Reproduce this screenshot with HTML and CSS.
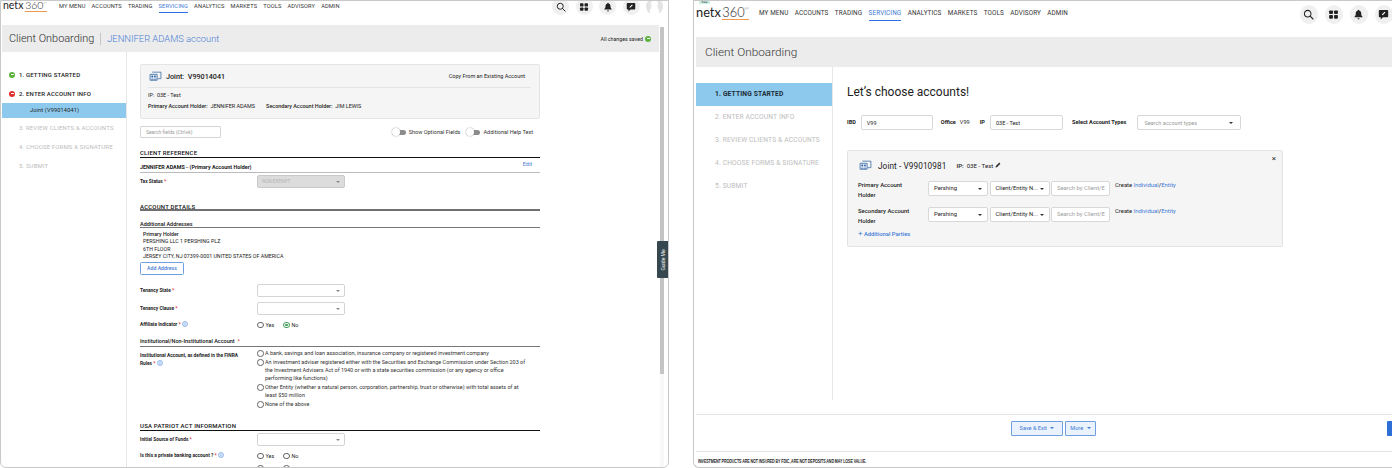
FILE: index.html
```html
<!DOCTYPE html>
<html lang="en">
<head>
<meta charset="utf-8">
<title>Client Onboarding</title>
<link rel="stylesheet" href="styles.css">
</head>
<body>
<svg class="defs" width="0" height="0" aria-hidden="true">
  <symbol id="i-search" viewBox="0 0 20 20"><circle cx="8.500" cy="8.500" r="6" fill="none" stroke="#222" stroke-width="1.900"/><path d="M13 13l5.200 5.200" stroke="#222" stroke-width="2" stroke-linecap="round"/></symbol>
  <symbol id="i-grid" viewBox="0 0 20 20"><rect x="2" y="2.500" width="7" height="6.500" rx="1.500" fill="#222"/><rect x="11" y="2.500" width="7" height="6.500" rx="1.500" fill="#222"/><rect x="2" y="11" width="7" height="6.500" rx="1.500" fill="#222"/><rect x="11" y="11" width="7" height="6.500" rx="1.500" fill="#222"/></symbol>
  <symbol id="i-bell" viewBox="0 0 20 20"><path d="M10 1.500c.8 0 1.300.6 1.300 1.300 2.700.7 3.700 3 3.700 5.700 0 3 1 4.300 2.300 5.700v1H2.700v-1C4 12.800 5 11.500 5 8.500c0-2.700 1-5 3.700-5.700 0-.7.5-1.300 1.300-1.300z" fill="#222"/><path d="M8 17h4a2 2 0 0 1-4 0z" fill="#222"/></symbol>
  <symbol id="i-chat" viewBox="0 0 20 20"><path d="M3 2h14a1.500 1.500 0 0 1 1.500 1.500v10A1.500 1.500 0 0 1 17 15H9l-4 4v-4H3a1.500 1.500 0 0 1-1.500-1.500v-10A1.500 1.500 0 0 1 3 2z" fill="#222"/><path d="M7 11.500l.5-2 4.500-4.500 1.500 1.500-4.500 4.500z" fill="#fff"/></symbol>
  <symbol id="i-acct" viewBox="0 0 24 20"><path d="M6 2h16v12h-6" fill="none" stroke="#3f6fa8" stroke-width="1.500"/><path d="M2 6h13v11H2z" fill="#dce7f3" stroke="#3f6fa8" stroke-width="1.500"/><circle cx="6" cy="10" r="1.700" fill="#2f5f9e"/><circle cx="11" cy="10" r="1.700" fill="#2f5f9e"/><path d="M3.500 15.500c0-2 5-2 5 0zM8.500 15.500c0-2 5-2 5 0z" fill="#2f5f9e"/></symbol>
  <symbol id="i-info" viewBox="0 0 12 12"><circle cx="6" cy="6" r="5" fill="#e3eefb" stroke="#3f7fd8" stroke-width="1"/><path d="M6 5v3.500M6 3v1" stroke="#3f7fd8" stroke-width="1.200"/></symbol>
</svg>

<section class="win win-a">
  <header class="topbar">
    <div class="logo"><b>netx</b><span>360<i>°*</i></span></div>
    <nav class="nav">
      <a>MY MENU</a><a>ACCOUNTS</a><a>TRADING</a><a class="on">SERVICING</a><a>ANALYTICS</a><a>MARKETS</a><a>TOOLS</a><a>ADVISORY</a><a>ADMIN</a>
    </nav>
    <div class="tools">
      <span class="ic"><svg><use href="#i-search"/></svg></span>
      <span class="ic"><svg><use href="#i-grid"/></svg></span>
      <span class="ic"><svg><use href="#i-bell"/></svg></span>
      <span class="ic"><svg><use href="#i-chat"/></svg></span>
      <span class="ic avatar"></span>
    </div>
  </header>
  <div class="hdr">
    <h1>Client Onboarding</h1><span class="acct">JENNIFER ADAMS account</span>
    <span class="saved">All changes saved <em class="dot ok"></em></span>
  </div>
  <div class="body">
    <aside class="side">
      <div class="step done"><em class="dot ok"></em>1. GETTING STARTED</div>
      <div class="step done"><em class="dot err"></em>2. ENTER ACCOUNT INFO</div>
      <div class="sub">Joint (V99014041)</div>
      <div class="step off">3. REVIEW CLIENTS &amp; ACCOUNTS</div>
      <div class="step off">4. CHOOSE FORMS &amp; SIGNATURE</div>
      <div class="step off">5. SUBMIT</div>
    </aside>
    <main class="form">
      <div class="card">
        <div class="card-top">
          <svg class="acct-ic"><use href="#i-acct"/></svg>
          <strong>Joint:&nbsp; V99014041</strong>
          <span class="copy">Copy From an Existing Account</span>
        </div>
        <p class="meta">IP:&nbsp; 03E - Test</p>
        <p class="meta holders"><span><b>Primary Account Holder:</b>&nbsp; JENNIFER ADAMS</span><span><b>Secondary Account Holder:</b>&nbsp; JIM LEWIS</span></p>
      </div>
      <div class="toolrow">
        <div class="search">Search fields (Ctrl+k)</div>
        <div class="switches">
          <span class="sw"><i></i>Show Optional Fields</span>
          <span class="sw"><i></i>Additional Help Text</span>
        </div>
      </div>
      <h2 class="sec s1">CLIENT REFERENCE</h2>
      <div class="subsec"><span>JENNIFER ADAMS - (Primary Account Holder)</span><a>Edit</a></div>
      <div class="row r-tax"><label>Tax Status <u>*</u></label><div class="sel dis">NON-EXEMPT</div></div>
      <h2 class="sec s2">ACCOUNT DETAILS</h2>
      <h3 class="minor m1">Additional Addresses</h3>
      <div class="addr"><b>Primary Holder</b><br>PERSHING LLC 1 PERSHING PLZ<br>6TH FLOOR<br>JERSEY CITY, NJ 07399-0001 UNITED STATES OF AMERICA</div>
      <button class="addbtn">Add Address</button>
      <div class="row r-st"><label>Tenancy State <u>*</u></label><div class="sel"></div></div>
      <div class="row r-cl"><label>Tenancy Clause <u>*</u></label><div class="sel"></div></div>
      <div class="row r-af"><label>Affiliate Indicator <u>*</u> <svg class="inf"><use href="#i-info"/></svg></label>
        <div class="radios"><span><i class="rd"></i>Yes</span><span><i class="rd chk"></i>No</span></div></div>
      <h3 class="minor m2">Institutional/Non-Institutional Account &nbsp;<u>*</u></h3>
      <div class="row r-in">
        <label>Institutional Account, as defined in the FINRA Rules <u>*</u> <svg class="inf"><use href="#i-info"/></svg></label>
        <div class="opts">
          <div><i class="rd"></i><span>A bank, savings and loan association, insurance company or registered investment company</span></div>
          <div><i class="rd"></i><span>An investment adviser registered either with the Securities and Exchange Commission under Section 203 of the Investment Advisers Act of 1940 or with a state securities commission (or any agency or office performing like functions)</span></div>
          <div><i class="rd"></i><span>Other Entity (whether a natural person, corporation, partnership, trust or otherwise) with total assets of at least $50 million</span></div>
          <div><i class="rd"></i><span>None of the above</span></div>
        </div>
      </div>
      <h2 class="sec s3">USA PATRIOT ACT INFORMATION</h2>
      <div class="row r-src"><label>Initial Source of Funds <u>*</u></label><div class="sel"></div></div>
      <div class="row r-pb"><label>Is this a private banking account ? <u>*</u> <svg class="inf"><use href="#i-info"/></svg></label>
        <div class="radios"><span><i class="rd"></i>Yes</span><span><i class="rd"></i>No</span></div></div>
      <div class="row r-last"><label></label><div class="radios"><span><i class="rd"></i></span><span><i class="rd"></i></span></div></div>
    </main>
  </div>
  <div class="scroll"><i></i></div>
  <div class="guide"><span>Guide Me</span></div>
</section>

<section class="win win-b">
  <span class="tag">RAA</span>
  <header class="topbar">
    <div class="logo"><b>netx</b><span>360<i>°*</i></span></div>
    <nav class="nav">
      <a>MY MENU</a><a>ACCOUNTS</a><a>TRADING</a><a class="on">SERVICING</a><a>ANALYTICS</a><a>MARKETS</a><a>TOOLS</a><a>ADVISORY</a><a>ADMIN</a>
    </nav>
    <div class="tools">
      <span class="ic"><svg><use href="#i-search"/></svg></span>
      <span class="ic"><svg><use href="#i-grid"/></svg></span>
      <span class="ic"><svg><use href="#i-bell"/></svg></span>
      <span class="ic"><svg><use href="#i-chat"/></svg></span>
    </div>
  </header>
  <div class="hdr"><h1>Client Onboarding</h1></div>
  <div class="body">
    <aside class="side">
      <div class="step cur">1. GETTING STARTED</div>
      <div class="step off">2. ENTER ACCOUNT INFO</div>
      <div class="step off">3. REVIEW CLIENTS &amp; ACCOUNTS</div>
      <div class="step off">4. CHOOSE FORMS &amp; SIGNATURE</div>
      <div class="step off">5. SUBMIT</div>
    </aside>
    <main class="choose">
      <h2 class="lets">Let’s choose accounts!</h2>
      <div class="filters">
        <b>IBD</b><div class="inp w-ibd">V99</div>
        <b class="f-off">Office</b><span class="f-v">V99</span>
        <b class="f-ip">IP</b><div class="inp w-ip">03E - Test</div>
        <b class="f-sel">Select Account Types</b><div class="inp w-sel ph">Search account types<em class="car"></em></div>
      </div>
      <div class="panel">
        <span class="close">×</span>
        <div class="p-head">
          <svg class="acct-ic"><use href="#i-acct"/></svg>
          <strong>Joint - V99010981</strong>
          <span class="p-ip"><b>IP:</b>&nbsp; 03E - Test <svg class="pen" viewBox="0 0 12 12"><path d="M1 11l.7-3L8.500 1.200l2.300 2.300L4 10.300z" fill="#333"/></svg></span>
        </div>
        <div class="holder">
          <label>Primary Account Holder</label>
          <div class="dd d1">Pershing<em class="car"></em></div>
          <div class="dd d2">Client/Entity N...<em class="car"></em></div>
          <div class="dd d3">Search by Client/E</div>
          <span class="create">Create <a>Individual</a>/<a>Entity</a></span>
        </div>
        <div class="holder">
          <label>Secondary Account Holder</label>
          <div class="dd d1">Pershing<em class="car"></em></div>
          <div class="dd d2">Client/Entity N...<em class="car"></em></div>
          <div class="dd d3">Search by Client/E</div>
          <span class="create">Create <a>Individual</a>/<a>Entity</a></span>
        </div>
        <a class="addp"><span>+</span> Additional Parties</a>
      </div>
    </main>
  </div>
  <footer class="actions">
    <button class="act a-save">Save &amp; Exit<em class="car"></em></button>
    <button class="act a-more">More<em class="car"></em></button>
    <span class="edge"></span>
  </footer>
  <div class="legal">INVESTMENT PRODUCTS ARE NOT INSURED BY FDIC, ARE NOT DEPOSITS AND MAY LOSE VALUE.</div>
</section>
</body>
</html>
```

FILE: styles.css
```css
* { box-sizing: border-box; }
html, body { margin: 0; height: 468px; overflow: hidden; background: #fff; }
body { display: flex; gap: 24px; font-family: Roboto, "Liberation Sans", sans-serif; color: #222; }
.defs { position: absolute; }
p, h1, h2, h3 { margin: 0; font-weight: 400; }
a { color: #3f7ad6; }
u { color: #e53935; text-decoration: none; }
em, i { font-style: normal; }

.win { position: relative; height: 468px; border: 1px solid #c9c9c9; border-radius: 0 0 6px 6px; overflow: hidden; background: #fff; }
.win-a { width: 669px; flex: none; padding-left: 1px; }
.win-b { flex: 1; border-right: 0; border-radius: 0 0 0 6px; padding-left: 2px; }

/* top bar */
.topbar { display: flex; align-items: flex-start; }
.logo { display: flex; align-items: baseline; color: #222; font-family: Lato, sans-serif; }
.logo b { font-weight: 400; }
.logo span { font-weight: 300; border-bottom: 1px solid #ee9a4d; white-space: nowrap; }
.logo i { font-size: 40%; vertical-align: super; line-height: 0; }
.nav { display: flex; }
.nav a { color: #333; white-space: nowrap; border-bottom: 1px solid transparent; }
.nav a.on { color: #3f7ad6; border-bottom-color: #2f6fe0; }
.tools { margin-left: auto; display: flex; }
.ic { display: flex; align-items: center; justify-content: center; border-radius: 50%; background: #f0f0f0; }
.ic svg { display: block; }
.avatar { background: radial-gradient(circle at 50% 35%, #fff 0 24%, transparent 25%), radial-gradient(ellipse at 50% 105%, #fff 0 42%, transparent 43%), #e4e4e4; }

.win-a .topbar { height: 25px; margin-top: -1px; }
.win-a .logo { font-size: 10.500px; height: 12px; line-height: 11px; width: 46px; flex: none; margin: 0 0 0 1px; }
.win-a .logo b { margin-right: 1.800px; }
.win-a .nav { margin-left: 10px; gap: 6.100px; font-size: 5.700px; letter-spacing: .11px; line-height: 11px; padding-top: 1px; }
.win-a .nav a { height: 12px; }
.win-a .tools { gap: 6.500px; padding-right: 5px; margin-top: -2px; }
.win-a .ic { width: 17px; height: 17px; }
.win-a .ic svg { width: 10px; height: 10px; }

.win-b .topbar { height: 36px; }
.win-b .logo { font-size: 12.800px; margin-top: 4px; width: 52px; flex: none; height: 15px; line-height: 14px; }
.win-b .logo b { margin-right: 1.500px; }
.win-b .nav { margin-left: 11px; gap: 6.400px; font-size: 6.350px; letter-spacing: .11px; padding-top: 7px; line-height: 11px; }
.win-b .nav a { height: 13px; }
.win-b .tools { gap: 6.500px; padding-top: 4px; margin-right: -1px; }
.win-b .ic { width: 18.500px; height: 18.500px; }
.win-b .ic svg { width: 11px; height: 11px; }
.tag { position: absolute; left: 5px; top: -1px; width: 11px; height: 4px; background: #cdeee0; font-size: 3px; line-height: 4px; text-align: center; color: #456; }

/* page header */
.hdr { display: flex; align-items: center; background: #ececec; }
.win-a .hdr { height: 27px; margin-right: 9px; padding-left: 7px; }
.win-a h1 { font-size: 10.900px; font-weight: 300; color: #2b2b2b; padding-right: 6px; border-right: 1px solid #c6c6c6; line-height: 12px; }
.acct { font-size: 9.400px; color: #4a80d6; margin-left: 6px; font-weight: 300; }
.saved { margin-left: auto; margin-right: 8px; font-size: 5.300px; display: flex; align-items: center; gap: 2px; }
.win-b .hdr { height: 30px; padding-left: 9px; }
.win-b h1 { font-size: 11.800px; color: #333; font-weight: 300; }

.dot { display: inline-block; position: relative; width: 6px; height: 6px; border-radius: 50%; }
.dot.ok { background: #5cb33c; }
.dot.err { background: #e02f2f; }
.dot::after { content: ""; position: absolute; left: 1.500px; top: 2.500px; width: 3px; height: 1px; background: #fff; }

/* body */
.body { display: flex; }
.side { flex: none; border-right: 1px solid #e6e6e6; font-size: 6px; letter-spacing: .15px; }
.step { white-space: nowrap; }
.step.off { color: #bdbdbd; }
.win-a .side { width: 125px; height: 420px; padding-top: 13px; }
.win-a .step { height: 19px; line-height: 19px; padding-left: 17px; font-weight: 500; position: relative; }
.win-a .step.off { font-weight: 400; }
.win-a .step .dot { position: absolute; left: 7px; top: 6.500px; }
.win-a .sub { height: 14.500px; line-height: 14px; padding-left: 28px; background: #8cc9ec; font-size: 5.600px; }

.form { width: 400px; margin-left: 13px; padding-top: 12px; font-size: 5.400px; flex: none; }
.card { height: 55px; background: #f5f5f5; border: 1px solid #e4e4e4; border-radius: 2px; padding: 0 8px 0 7px; }
.card-top { display: flex; align-items: center; height: 23px; border-bottom: 1px solid #e4e4e4; font-size: 7.200px; padding-left: 1px; }
.acct-ic { width: 13px; height: 11px; flex: none; }
.card-top .acct-ic { margin-right: 4px; }
.card-top strong { font-weight: 500; }
.copy { margin-left: auto; margin-right: 6px; font-size: 5.500px; }
.meta { line-height: 11px; font-size: 5.450px; }
.meta:first-of-type { margin-top: 2px; }
.holders { display: flex; gap: 11px; }
.holders b { font-weight: 500; }
.toolrow { display: flex; justify-content: space-between; align-items: center; height: 12px; margin-top: 7px; }
.search { width: 81px; height: 12px; border: 1px solid #d6d6d6; line-height: 10px; padding-left: 5px; color: #999; font-size: 5px; border-radius: 1px; }
.switches { display: flex; gap: 6px; margin-right: 7px; font-size: 5.550px; color: #333; }
.sw { display: flex; align-items: center; gap: 3px; }
.sw i { position: relative; width: 14px; height: 5px; background: #8c8c8c; border-radius: 3px; }
.sw i::before { content: ""; position: absolute; left: 0; top: -1.500px; width: 8px; height: 8px; border-radius: 50%; background: #fff; box-shadow: 0 0 1.500px #888; }

.sec { font-weight: 500; font-size: 6px; letter-spacing: .2px; line-height: 9px; color: #111; }
.s1 { margin-top: 9px; height: 11px; padding-top: 1px; border-bottom: 1px solid #111; }
.subsec { display: flex; justify-content: space-between; height: 15px; border-bottom: 1.500px solid #bcbcbc; font-size: 5.400px; font-weight: 700; padding-top: 6px; line-height: 7px; }
.subsec a { font-weight: 400; margin: -3px 8px 0 0; }
.row { display: grid; grid-template-columns: 117px 88px; }
.row label { font-weight: 700; font-size: 4.800px; line-height: 7.500px; }
.r-tax { margin-top: 2px; align-items: center; }
.sel { height: 13px; border: 1px solid #d4d4d4; border-radius: 2px; position: relative; font-size: 4.500px; line-height: 11px; padding-left: 4px; color: #b5b5b5; }
.sel::after { content: ""; position: absolute; right: 4px; top: 4.500px; border: 2px solid transparent; border-top: 2.500px solid #888; }
.sel.dis { background: #dcdcdc; border-color: #c9c9c9; }
.s2 { margin-top: 11px; height: 12px; padding-top: 2.500px; border-bottom: 2px solid #707070; }
.minor { font-weight: 500; font-size: 5.500px; line-height: 9px; color: #111; }
.m1 { margin-top: 5px; height: 12px; padding-top: 3.500px; border-bottom: 1px solid #777; }
.addr { font-size: 5.300px; line-height: 7.400px; padding: 3px 0 0 3px; height: 31px; }
.addr b { font-weight: 500; }
.addbtn { display: block; margin-top: 3px; width: 44px; height: 12.500px; padding: 0; background: #fff; border: 1px solid #6f9fe0; border-radius: 1.500px; color: #3f7ad6; font: 500 5.200px Roboto, sans-serif; }
.r-st { margin-top: 9.500px; align-items: center; }
.r-cl { margin-top: 5px; align-items: center; }
.r-af { margin-top: 4px; height: 12px; align-items: center; }
.inf { width: 6px; height: 6px; vertical-align: -1px; }
.radios { display: flex; gap: 9px; font-size: 5.400px; align-items: center; white-space: nowrap; }
.radios span { display: flex; align-items: center; gap: 2px; width: 17px; }
.rd { display: inline-block; flex: none; width: 6.500px; height: 6.500px; border: .7px solid #666; border-radius: 50%; background: #fff; }
.rd.chk { border-color: #3e9a58; background: radial-gradient(circle, #3e9a58 0 34%, #fff 38%); }
.m2 { margin-top: 5px; height: 11px; padding-top: 1px; border-bottom: 1px solid #777; }
.r-in { grid-template-columns: 117px 271px; margin-top: 3px; }
.r-in label { padding: 2px 14px 0 0; line-height: 7.500px; }
.opts div { display: flex; gap: 1.500px; line-height: 7.700px; font-size: 5.470px; margin-bottom: 1.600px; color: #333; }
.s3 { margin-top: 9px; height: 12px; padding-top: 2px; border-bottom: 1px solid #111; }
.r-src { margin-top: 2px; align-items: center; }
.r-pb { margin-top: 5px; height: 9px; align-items: center; }
.r-last { margin-top: 5px; }

.scroll { position: absolute; top: 26px; right: 4px; width: 4px; height: 442px; background: #f8f8f8; }
.scroll i { display: block; height: 347px; background: #c4c4c4; }
.guide { position: absolute; left: 656px; top: 240px; width: 11px; height: 37px; background: #37474f; border-radius: 1px 0 0 1px; display: flex; align-items: center; justify-content: center; }
.guide span { color: #fff; font-size: 5px; white-space: nowrap; transform: rotate(-90deg); }

/* right window */
.win-b .body { height: 347px; }
.win-b .side { width: 137px; height: 333px; padding-top: 16px; font-size: 6.700px; }
.win-b .step { height: 23px; line-height: 23px; padding-left: 19px; }
.step.cur { background: #8cc9ec; font-weight: 700; color: #1d2b36; }
.choose { flex: 1; padding: 16px 0 0 14px; }
.lets { font-size: 12px; line-height: 18px; color: #222; }
.filters { display: flex; align-items: center; margin-top: 14px; font-size: 5.600px; height: 15px; }
.filters b { font-weight: 700; position: relative; top: -1px; }
.inp { height: 15px; border: 1px solid #d8d8d8; border-radius: 2px; line-height: 14px; padding-left: 5px; position: relative; font-size: 5.500px; }
.w-ibd { width: 72px; margin-left: 5px; }
.f-off { margin-left: 8px; }
.f-v { margin-left: 4px; position: relative; top: -1px; }
.f-ip { margin-left: 10px; }
.w-ip { width: 73px; margin-left: 5px; }
.f-sel { margin-left: 9px; }
.w-sel { width: 104px; margin-left: 11px; padding-left: 6px; }
.ph { color: #9a9a9a; }
.car { display: inline-block; width: 0; height: 0; border: 2px solid transparent; border-top: 2.500px solid #333; }
.inp .car { position: absolute; right: 7px; top: 6px; }
.panel { position: relative; width: 436px; height: 97px; margin-top: 20px; background: #f5f5f5; border: 1px solid #e3e3e3; border-radius: 2px; padding: 0 10px; }
.close { position: absolute; right: 6px; top: 3px; font-size: 8px; line-height: 10px; color: #333; }
.p-head { display: flex; align-items: center; height: 30px; padding-bottom: 1px; }
.p-head .acct-ic { margin: 0 6px 0 1px; }
.p-head strong { font-size: 8.200px; font-weight: 400; letter-spacing: .1px; }
.p-ip { font-size: 6.100px; margin-left: 10px; }
.p-ip b { font-weight: 500; }
.pen { width: 6px; height: 6px; }
.holder { display: flex; align-items: flex-start; height: 26px; font-size: 5.900px; }
.holder label { width: 70px; line-height: 9.500px; font-weight: 500; padding-right: 18px; color: #222; }
.dd { height: 15px; border: 1px solid #d8d8d8; border-radius: 2px; background: #fff; line-height: 13px; padding-left: 5px; position: relative; margin-right: 1.500px; white-space: nowrap; }
.holder .car { position: absolute; right: 5px; top: 5.500px; }
.d1 { width: 60px; }
.d2 { width: 60px; }
.d3 { width: 59px; color: #a0a0a0; overflow: hidden; }
.create { margin-left: 3.500px; line-height: 9px; white-space: nowrap; }
.addp { display: block; font-size: 5.800px; font-weight: 500; margin-top: -3px; line-height: 8px; }
.addp span { font-size: 8px; line-height: 6px; font-weight: 400; }

.actions { position: relative; height: 38px; border-top: 1px solid #e4e4e4; border-bottom: 1.500px solid #e4e4e4; display: flex; justify-content: center; gap: 2px; padding: 6px 0 0 0; }
.act { height: 14.500px; padding: 0; background: #e9f2fd; border: 1px solid #6f9fe0; border-radius: 1px; color: #3f7ad6; font: 400 5.600px Roboto, sans-serif; display: flex; align-items: center; justify-content: center; gap: 3.500px; }
.act .car { border-top-color: #3f7ad6; margin-top: 2px; }
.a-save { width: 52px; margin-left: 19px; }
.a-more { width: 31px; }
.edge { position: absolute; right: 0; top: 6px; width: 5px; height: 15px; background: #2d6fd6; border-radius: 1px 0 0 1px; }
.legal { font-size: 5.200px; padding: 5px 0 0 3px; font-family: "Liberation Sans", sans-serif; color: #222; line-height: 8px; letter-spacing: -.13px; font-weight: 700; white-space: nowrap; transform: scaleX(.703); transform-origin: left center; }
```
